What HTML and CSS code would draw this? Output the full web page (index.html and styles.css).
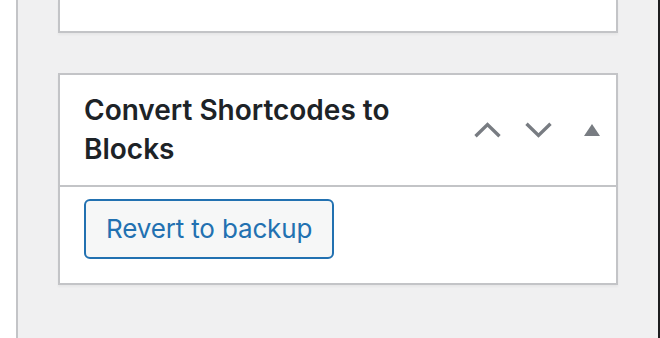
FILE: index.html
```html
<!DOCTYPE html>
<html lang="en">
<head>
<meta charset="utf-8">
<title>Convert Shortcodes to Blocks</title>
<link rel="stylesheet" href="styles.css">
</head>
<body>
<div class="screen">
  <div class="gutter"></div>
  <div class="panel">
    <div class="postbox postbox-cut"></div>
    <div class="postbox">
      <div class="postbox-header">
        <h2 class="hndle">Convert Shortcodes to Blocks</h2>
        <div class="handle-actions">
          <button class="handle-btn btn-up" type="button" aria-label="Move up">
            <svg width="27" height="16" viewBox="0 0 27 16"><polyline points="1.5,14.2 13.5,2.6 25.5,14.2" fill="none" stroke="#787c82" stroke-width="3.4"/></svg>
          </button>
          <button class="handle-btn btn-down" type="button" aria-label="Move down">
            <svg width="27" height="16" viewBox="0 0 27 16"><polyline points="1.5,1.8 13.5,13.4 25.5,1.8" fill="none" stroke="#787c82" stroke-width="3.4"/></svg>
          </button>
          <button class="handle-btn btn-toggle" type="button" aria-label="Toggle panel">
            <svg width="16" height="12" viewBox="0 0 16 12"><polygon points="0,12 8,0 16,12" fill="#787c82"/></svg>
          </button>
        </div>
      </div>
      <div class="inside">
        <button class="button" type="button">Revert to backup</button>
      </div>
    </div>
  </div>
</div>
</body>
</html>
```
FILE: styles.css
```css
* { box-sizing: border-box; }

html, body {
  margin: 0;
  padding: 0;
  background: #ffffff;
}

body {
  font-family: Inter, "Noto Sans", "Liberation Sans", sans-serif;
  color: #1d2327;
}

.screen {
  display: flex;
  width: 660px;
  height: 338px;
  overflow: hidden;
}

.gutter {
  width: 16px;
  flex: none;
  background: #ffffff;
}

.panel {
  flex: 1;
  background: #f0f0f1;
  border-left: 2px solid #c3c4c7;
  border-right: 2px solid #1d1d1f;
  padding: 0 40px;
  display: flex;
  flex-direction: column;
  gap: 40px;
}

.postbox {
  background: #ffffff;
  border: 2px solid #c3c4c7;
  box-shadow: 0 2px 2px rgba(0, 0, 0, 0.04);
}

.postbox-cut {
  border-top: none;
  height: 33px;
  flex: none;
}

.postbox-header {
  display: flex;
  align-items: center;
  border-bottom: 2px solid #c3c4c7;
}

.hndle {
  flex: 1;
  margin: 0;
  padding: 16px 24px;
  font-size: 28px;
  font-weight: 600;
  line-height: 39.2px;
  color: #1d2327;
}

.handle-actions {
  display: flex;
  align-items: center;
  padding-right: 16px;
}

.handle-btn {
  border: 0;
  background: none;
  padding: 0;
  margin: 0;
  display: flex;
  align-items: center;
  justify-content: center;
  cursor: pointer;
}

.btn-down { margin-left: 24px; }
.btn-toggle { margin-left: 32px; }

.inside {
  padding: 12px 24px 24px;
}

.button {
  font-family: inherit;
  font-size: 26px;
  letter-spacing: -0.15px;
  line-height: 56px;
  height: 60px;
  padding: 0 20px;
  color: #2271b1;
  background: #f6f7f7;
  border: 2px solid #2271b1;
  border-radius: 6px;
  cursor: pointer;
}
```
